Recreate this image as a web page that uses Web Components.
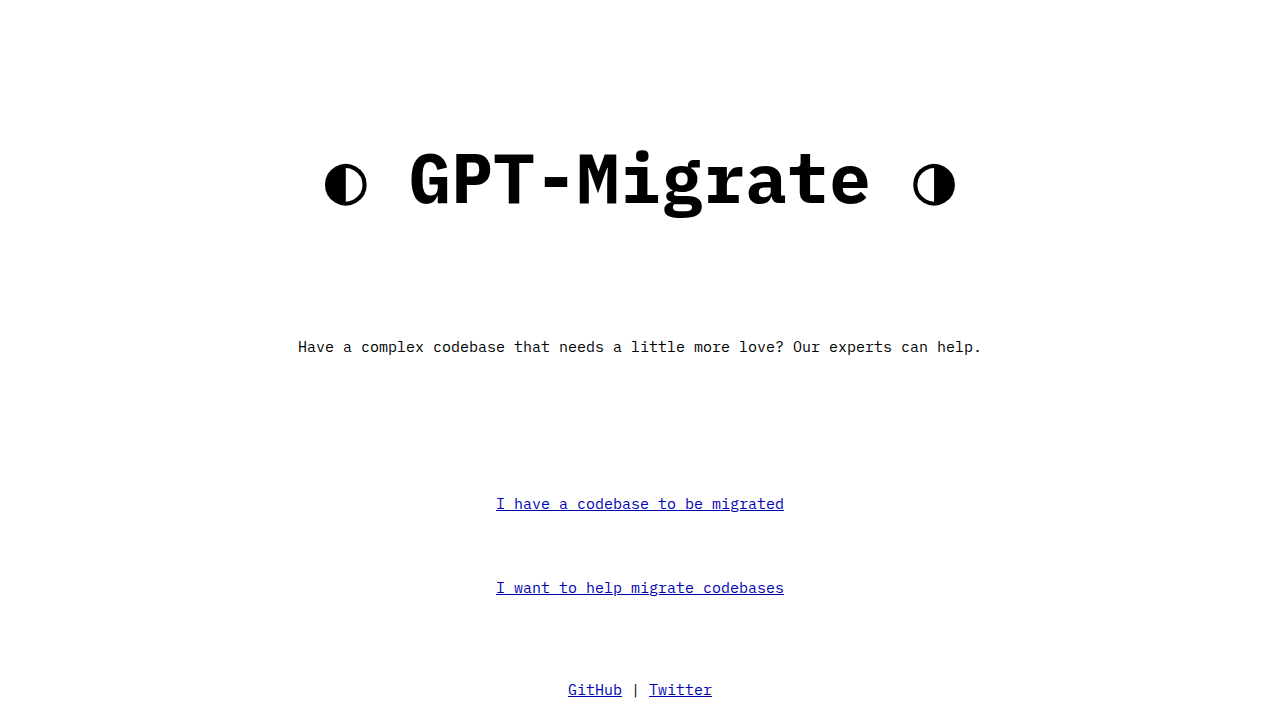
<!DOCTYPE html>
<html lang="en">
<head>
    <meta charset="UTF-8">
    <meta name="viewport" content="width=device-width, initial-scale=1.0">
    <title>GPT-Migrate</title>
    <style>
        body {
            margin: 0;
            background: #fff;
            color: #000;
            font-family: "IBM Plex Mono", "DejaVu Sans Mono", monospace;
            font-size: 15px;
            line-height: 20px;
        }
    </style>
</head>
<body>
    <landing-page>
        <page-title slot="title">GPT-Migrate</page-title>
        <span slot="tagline">Have a complex codebase that needs a little more love? Our experts can help.</span>
        <text-link href="#migrate">I have a codebase to be migrated</text-link>
        <text-link href="#help">I want to help migrate codebases</text-link>
        <page-footer slot="footer">
            <text-link href="#github">GitHub</text-link> | <text-link href="#twitter">Twitter</text-link>
        </page-footer>
    </landing-page>

    <script>
        class LandingPage extends HTMLElement {
            constructor() {
                super();
                this.attachShadow({ mode: "open" });
                this.shadowRoot.innerHTML = `
                    <style>
                        :host {
                            display: block;
                            text-align: center;
                        }
                        main {
                            display: flex;
                            flex-direction: column;
                            align-items: center;
                            padding: 133px 16px 82px;
                        }
                        p {
                            margin: 116px 0 137px;
                        }
                        nav {
                            display: flex;
                            flex-direction: column;
                            align-items: center;
                            gap: 64px;
                        }
                        footer {
                            padding-bottom: 20px;
                        }
                    </style>
                    <main>
                        <slot name="title"></slot>
                        <p><slot name="tagline"></slot></p>
                        <nav><slot></slot></nav>
                    </main>
                    <footer><slot name="footer"></slot></footer>
                `;
            }
        }

        class PageTitle extends HTMLElement {
            constructor() {
                super();
                this.attachShadow({ mode: "open" });
                this.shadowRoot.innerHTML = `
                    <style>
                        :host {
                            display: block;
                        }
                        h1 {
                            margin: 0;
                            font-size: 70px;
                            font-weight: 700;
                            line-height: 88px;
                        }
                    </style>
                    <h1>◐ <slot></slot> ◑</h1>
                `;
            }
        }

        class TextLink extends HTMLElement {
            constructor() {
                super();
                this.attachShadow({ mode: "open" });
                this.shadowRoot.innerHTML = `
                    <style>
                        :host {
                            display: inline-block;
                        }
                        a {
                            color: #0000b4;
                            text-decoration: underline;
                        }
                    </style>
                    <a><slot></slot></a>
                `;
                this.shadowRoot.querySelector("a").href = this.getAttribute("href");
            }
        }

        class PageFooter extends HTMLElement {
            constructor() {
                super();
                this.attachShadow({ mode: "open" });
                this.shadowRoot.innerHTML = `
                    <style>
                        :host {
                            display: block;
                        }
                    </style>
                    <slot></slot>
                `;
            }
        }

        customElements.define("landing-page", LandingPage);
        customElements.define("page-title", PageTitle);
        customElements.define("text-link", TextLink);
        customElements.define("page-footer", PageFooter);
    </script>
</body>
</html>
